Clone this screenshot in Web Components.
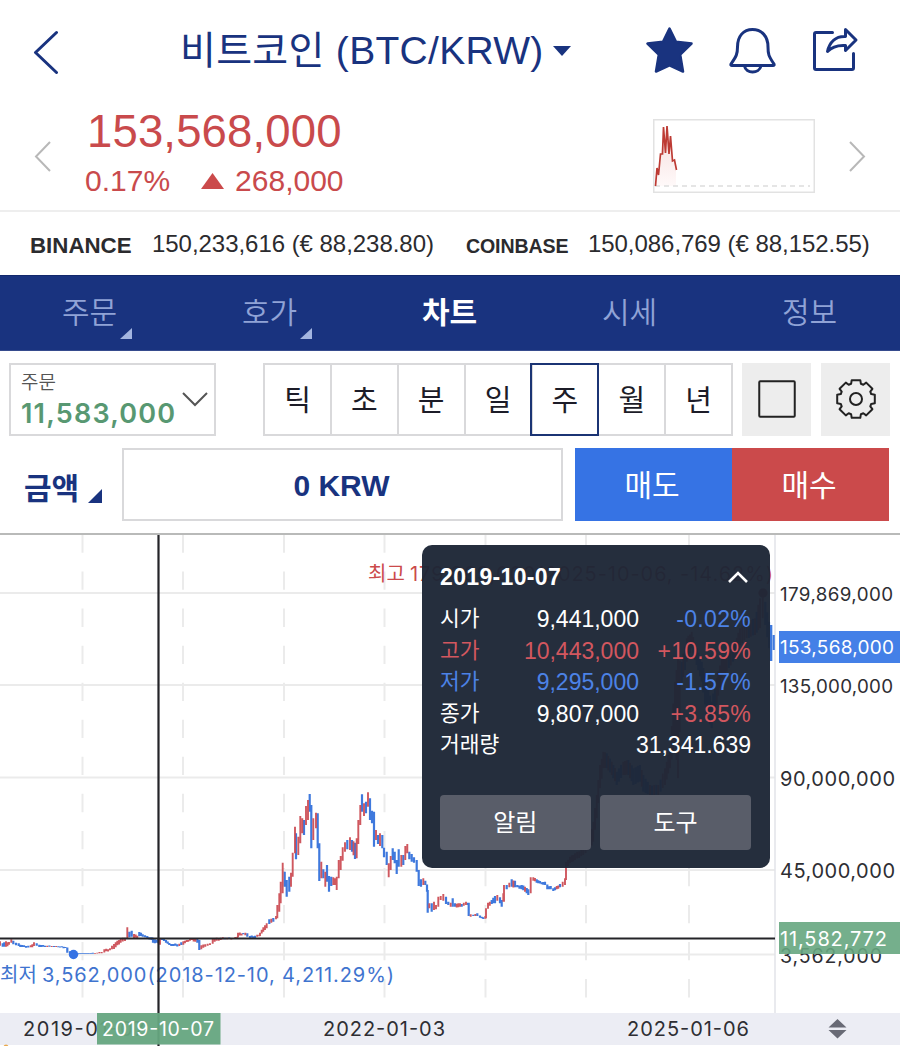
<!DOCTYPE html>
<html lang="ko">
<head>
<meta charset="utf-8">
<title>BTC/KRW</title>
<style>
  body {
    margin: 0;
    width: 900px;
    height: 1046px;
    overflow: hidden;
    background: #fff;
    color: #2b2b2e;
    font-family: "Liberation Sans", "Noto Sans CJK KR", sans-serif;
    --navy: #19337f;
    --red: #cb4a4b;
    --blue: #3673e4;
    --line: #d9d9db;
  }
</style>
</head>
<body>
<coin-app></coin-app>

<script>
"use strict";

////////////////////////////////////////////
// Base class: opens a shadow root and fills it from render()
class BaseElement extends HTMLElement {
  constructor() {
    super();
    this._root = this.attachShadow({ mode: "open" });
  }
  connectedCallback() {
    this._root.innerHTML = `<style>* { box-sizing: border-box; }</style>` + this.render();
  }
}

////////////////////////////////////////////
// Header
class AppHeader extends BaseElement {
  render() {
    return `
      <style>
        :host { display: flex; height: 102px; color: var(--navy); align-items: center; padding-left: 32px; }
        svg { display: block; fill: none; stroke: var(--navy); stroke-linecap: round; stroke-linejoin: round; flex: none; }
        h1 { margin: 0 0 0 120px; width: 365px; font-size: 39px; font-weight: 400; line-height: 60px; letter-spacing: .3px; white-space: nowrap; }
        .caret { margin-left: 7px; fill: var(--navy); stroke: none; }
        .icons { display: flex; margin-left: 74px; gap: 36px; }
      </style>
      <svg width="28" height="46" viewBox="0 0 28 46" stroke-width="3"><path d="M24.500 4.500L3.500 24.500l21 20"/></svg>
      <h1><slot></slot></h1>
      <svg class="caret" width="20" height="12" viewBox="0 0 20 12"><path d="M1 1h18l-9 10z"/></svg>
      <div class="icons">
        <svg width="47" height="48" viewBox="0 0 47 48" stroke-width="2.500" style="fill:var(--navy)"><path d="M23.500 3l6.500 13.300 15.500 1.800-11.300 11 2.800 16.900-13.500-6.200L10 46l2.800-16.900L1.500 18.100 17 16.300z" transform="translate(0 -1.500)"/></svg>
        <svg width="47" height="48" viewBox="0 0 47 48" stroke-width="3"><path d="M8.500 22c0-11 6-17.500 15-17.500S39 11 39 22c0 7 .5 9 6 17q.5 1.600-1 1.600H3q-1.500 0-1-1.600c5.500-8 6.500-10 6.500-17zM15.500 41c1.500 8 14.500 8 16.500 0" transform="translate(0 -2)"/></svg>
        <svg width="48" height="48" viewBox="0 0 48 48" stroke-width="3"><path d="M20.500 5.500H4q-1.500 0-1.500 1.500v34q0 1.500 1.500 1.500h36q1.500 0 1.500-1.500V26.500"/><path d="M15.500 24.500c2-9 8-15.500 18-15V2.500l10.500 10.500-10.500 10.500v-5c-8-.5-13.500 1-18 6z"/></svg>
      </div>`;
  }
}

////////////////////////////////////////////
// Price, change and the small day chart
class QuoteSummary extends BaseElement {
  render() {
    return `
      <style>
        :host { display: flex; align-items: center; height: 110px; border-bottom: 2px solid #eee; color: #c94a4c; padding: 0 34px; }
        svg { display: block; flex: none; }
        .quote { margin-left: 33px; flex: 1; align-self: flex-start; }
        .price { font-size: 45.500px; line-height: 50px; letter-spacing: .15px; margin: 5px 0 0 2px; }
        .change { display: flex; align-items: center; font-size: 30px; line-height: 34px; margin-top: 7px; }
        .change svg { margin: 0 11px 0 31px; }
      </style>
      <svg width="18" height="32" viewBox="0 0 18 32" fill="none" stroke="#b8b8b8" stroke-width="2"><path d="M16 2L2 16.500 16 31"/></svg>
      <div class="quote">
        <div class="price"><slot name="price"></slot></div>
        <div class="change">
          <slot name="rate"></slot>
          <svg width="23" height="16" viewBox="0 0 23 16"><path d="M11.500 0L23 16H0z" fill="#cb4a4b"/></svg>
          <slot name="diff"></slot>
        </div>
      </div>
      <svg width="162" height="74" viewBox="0 0 162 74" style="margin-right:33px">
        <defs><linearGradient id="fade" x2="0" y2="1"><stop stop-color="#eec4c4"/><stop offset="1" stop-color="#fff5f5"/></linearGradient></defs>
        <rect x=".75" y=".75" width="160.500" height="72.500" fill="#fff" stroke="#e2e2e2" stroke-width="1.500"/>
        <path d="M2 67L4 48l2 7 2-20 3-25 2 25 2-28 1.500 28 1.500-18 2 26 2-1 1 10v15z" fill="url(#fade)" opacity=".6"/>
        <path d="M2 67H157" stroke="#ddd" stroke-width="1.500" stroke-dasharray="5 4"/>
        <path d="M2.500 67L4 49l1.500 7L7.500 35h2l1-27 2 26 1.500-27 2 28 1.500-18 2 25 2-1 2 10" fill="none" stroke="#bd3b34" stroke-width="1.700"/>
      </svg>
      <svg width="18" height="32" viewBox="0 0 18 32" fill="none" stroke="#b8b8b8" stroke-width="2"><path d="M2 2l14 14.500L2 31"/></svg>`;
  }
}

class ExchangeQuote extends BaseElement {
  render() {
    return `
      <style>
        :host { display: flex; align-items: baseline; white-space: nowrap; font-size: 24px; letter-spacing: -.04px; }
        b { font-size: 22.300px; margin-right: 19px; width: 103px; letter-spacing: 0; position: relative; top: 1px; }
        :host([compact]) b { font-size: 19.600px; letter-spacing: -.1px; }
      </style>
      <b>${this.getAttribute("name")}</b><slot></slot>`;
  }
}

////////////////////////////////////////////
// Tabs
class TabItem extends BaseElement {
  render() {
    return `
      <style>
        :host { display: flex; align-items: center; justify-content: center; position: relative; flex: 1; color: #90a3d6; font-size: 30px; font-weight: 350; padding-bottom: 6px; padding-right: 1px; }
        :host([active]) { color: #fff; font-weight: 700; }
        .corner { display: none; position: absolute; right: 48px; bottom: 11px; }
        :host([menu]) .corner { display: block; }
      </style>
      <slot></slot>
      <svg class="corner" width="12" height="11" viewBox="0 0 12 11"><path d="M12 0v11H0z" fill="#a3b5e0"/></svg>`;
  }
}

class TabBar extends BaseElement {
  render() {
    return `
      <style>:host { display: flex; height: 76px; background: var(--navy); border-top: 1px solid #12286c; border-bottom: 1px solid #364b8d; }</style>
      <slot></slot>`;
  }
}

////////////////////////////////////////////
// Chart toolbar
class OrderBox extends BaseElement {
  render() {
    return `
      <style>
        :host { display: flex; align-items: center; width: 207px; height: 73px; border: 2px solid var(--line); padding: 0 0 0 10px; }
        .label { font-size: 19px; line-height: 25px; color: #555; font-weight: 350; }
        .value { font: 600 27px/32px Inter, sans-serif; color: #589872; letter-spacing: 1.200px; margin-top: 3px; }
        .text { width: 161px; white-space: nowrap; }
        svg { margin-bottom: 1px; }
      </style>
      <div class="text">
        <div class="label">${this.getAttribute("label")}</div>
        <div class="value"><slot></slot></div>
      </div>
      <svg width="26" height="16" viewBox="0 0 26 16" fill="none" stroke="#555" stroke-width="2"><path d="M1 2l12 12L25 2"/></svg>`;
  }
}

class PeriodItem extends BaseElement {
  render() {
    return `
      <style>
        :host { display: flex; align-items: center; justify-content: center; width: 69px; height: 73px; margin-right: -2.100px; border: 2px solid var(--line); font-size: 29px; color: #1c1c28; padding-bottom: 4px; }
        :host([active]) { border-color: #1b3474; position: relative; }
      </style>
      <slot></slot>`;
  }
}

class ToolButton extends BaseElement {
  render() {
    return `
      <style>:host { display: flex; align-items: center; justify-content: center; width: 69px; height: 73px; background: #ededed; padding-bottom: 1px; }</style>
      <slot></slot>`;
  }
}

class ChartToolbar extends BaseElement {
  render() {
    return `
      <style>
        :host { display: flex; height: 73px; padding: 0 10px 0 9px; margin-top: 12px; }
        .periods { display: flex; margin: 0 11px 0 47px; width: 468px; flex: none; }
        tool-button + tool-button { margin-left: 10px; }
        svg { display: block; }
      </style>
      <order-box label="주문">11,583,000</order-box>
      <div class="periods">
        ${["틱", "초", "분", "일", "주", "월", "년"].map((p) => `<period-item${p === "주" ? " active" : ""}>${p}</period-item>`).join("")}
      </div>
      <tool-button><svg width="38" height="38" viewBox="0 0 38 38"><rect x="1.250" y="1.250" width="35.500" height="35.500" rx="1" fill="none" stroke="#222" stroke-width="2"/></svg></tool-button>
      <tool-button>
        <svg width="42" height="42" viewBox="-21 -21 42 42" fill="none" stroke="#222" stroke-width="2" stroke-linejoin="round">
          <path d="${gearPath()}"/><circle r="6"/>
        </svg>
      </tool-button>`;
  }
}

class AmountRow extends BaseElement {
  render() {
    return `
      <style>
        :host { display: flex; height: 73px; margin-top: 12px; padding: 0 11px 0 24px; color: var(--navy); font-weight: 700; }
        .label { display: flex; width: 97.500px; font-size: 30px; align-items: center; padding-top: 3px; }
        .label svg { margin: 19px 0 0 9px; }
        .amount { display: flex; align-items: center; justify-content: center; width: 441px; border: 2px solid var(--line); font-size: 30px; padding: 3px 1px 0 0; margin-right: 12px; }
        .side { display: flex; align-items: center; justify-content: center; width: 157px; color: #fff; font-weight: 400; font-size: 30px; padding: 0 2px 4px 0; }
        .sell { background: var(--blue); }
        .buy { background: var(--red); }
      </style>
      <div class="label">금액<svg width="14" height="14" viewBox="0 0 14 14"><path d="M14 0v14H0z" fill="#19337f"/></svg></div>
      <div class="amount"><slot></slot></div>
      <div class="side sell">매도</div>
      <div class="side buy">매수</div>`;
  }
}

// Gear outline with eight teeth
function gearPath() {
  const points = [];
  for (let i = 0; i < 8; i++) {
    [[-18, 16], [-13, 19.300], [13, 19.300], [18, 16]].forEach(([deg, r]) => {
      const a = ((i * 45 + deg - 90) * Math.PI) / 180;
      points.push(`${(Math.cos(a) * r).toFixed(1)} ${(Math.sin(a) * r).toFixed(1)}`);
    });
  }
  return `M${points.join("L")}z`;
}

////////////////////////////////////////////
// Candle data. Each chunk has its own origin and is stored at 3x.
// Points: x, high, low, colour (r = up, b = down, m = alternating)
const CHUNKS = [
  { x: 0, y: 780, points: `0 484 497r 8 490 500b 18 484 500r 27 486 494r 34 478 488r 40 482 493b 48 488 496b 56 490 498b 66 495 501b 78 498 503b 92 496 502r 102 487 498r 110 490 497b 118 494 501b 135 497 501m 155 498 501m 175 499 502b 196 501 504b 202 506 518b 210 514 523b 220 520 524b 245 520 522b 265 520 522b 285 519 521r 305 516 520r 313 508 517r 330 505 511r 342 492 507r 352 482 496r 362 475 488r 375 473 483r 382 442 475r 388 455 472b 395 452 470b 402 462 474r 412 467 475m 418 456 468b 428 463 470b 442 468 474b 455 472 480b 459 473 488b 470 480 488b 480 474 494r 486 476 480b 498 480 488b 508 489 495b 520 492 498b 538 491 498m 550 484 494r 560 480 486r 575 475 480r 592 474 488b 598 480 510b 604 496 508r 616 493 500r 630 490 495r 638 476 488r 650 473 482r 675 473 478m 700 474 477m 712 470 476r 714 458 470r 730 459 463m 742 460 470b 750 468 474b 765 467 474m 778 464 469r` },
  { x: 240, y: 770, points: `60 488 498r 70 472 485r 80 460 475r 88 448 462m 100 444 455m 108 438 448r 112 405 445r 118 370 425r 122 335 400r 128 278 370r 134 305 350b 140 330 380b 148 320 365m 153 308 350r 158 248 320r 165 170 250r 168 190 268m 175 200 255r 181 138 220r 187 145 190m 192 150 195m 198 108 165r 204 90 150r 209 72 125b 214 105 235b 220 145 210r 228 128 175r 233 130 235b 238 220 333b 244 275 325m 250 298 325m 256 305 350r 261 285 335b 267 318 365b 274 320 348m 280 322 345m 285 325 345r 290 320 360r 296 270 325r 302 258 300r 308 232 272r 315 217 245r 322 210 238m 330 202 240m 336 210 245m 345 218 267m 350 205 265r 355 150 222r 361 105 165r 366 73 125b 372 100 138m 378 95 130m 384 67 110r 390 85 150b 396 122 160b 402 125 230b 408 180 210m 414 195 222m 420 190 228m 427 195 235b 432 235 262b 440 245 285b 446 280 322r 452 258 300r 458 235 270b 464 245 280b 470 270 312b 476 238 290m 484 255 290r 490 255 285m 496 228 270r 502 222 250r 508 245 268b 515 252 275b 522 262 278b 530 270 305b 536 300 348b 543 328 350m 550 325 345m 556 332 345b 561 360 365b 563 360 428b 568 400 415m 575 400 425b 582 395 420r 588 405 418r 595 380 410r 602 378 390r 610 372 392m 618 380 402b 625 395 405b 632 398 410r 638 385 410b 645 400 410m 655 400 412r 665 402 410m 678 395 405r 684 398 405b 686 398 438b 692 433 440r 700 434 438m 712 430 438m 720 438 443b 730 442 447b 736 438 446r 738 415 445r 744 398 410r 755 390 402b 765 378 400m 772 375 392r 780 382 400b 785 390 410b 790 370 395r 792 345 395r 800 345 358b 808 338 352r 815 328 350m 825 332 352m 832 345 352b 845 345 358b 855 350 365m 865 358 375b 872 322 370r 880 322 332r 890 328 338b 905 337 343b 915 335 345b 922 350 358b 932 348 358b 940 355 363b 950 348 358r 960 342 352b 968 335 350r 975 325 345r 978 290 330r` },
  { x: 410, y: 535, points: `468 980 1000r 480 965 985r 495 955 975r 520 940 960r 540 900 940r 550 860 920r 560 780 850r 570 690 760r 580 650 700r 590 655 700m 605 680 720m 620 710 750b 640 680 720r 655 675 720m 670 700 750b 690 690 740m 700 720 770b 720 750 780m 745 750 780m 765 700 750r 780 640 700r 795 440 620r 804 370 730r 815 380 450m 830 310 380r 845 290 340r 860 340 390b 875 380 440b 890 440 540b 905 500 580b 920 430 510r 935 370 430r 950 360 410m 975 320 370r 990 280 330r 1010 260 310m 1035 250 300m 1050 190 280r 1058 175 250r 1066 200 270b 1077 260 340b 1083 270 378b 1091 300 345b` },
];
const CANDLE_STEP = 6;

// Spreads bars every 2px between the stored points, each one touching the bar before it
function buildCandles() {
  const paths = { r: "", b: "" };
  let flip = 0;
  CHUNKS.forEach((chunk) => {
    const pts = chunk.points.match(/\d+ \d+ \d+[rbm]/g).map((s) => {
      const [x, top, bottom] = s.split(" ").map((n) => parseInt(n, 10));
      return { x, top, bottom, c: s.slice(-1) };
    });
    let last = null;
    pts.forEach((p, i) => {
      const next = pts[i + 1] ?? p;
      const count = Math.max(1, Math.round((next.x - p.x) / CANDLE_STEP));
      for (let k = 0; k < count; k++) {
        const t = k / count;
        const wob = k ? [-1, 1.500, 0][flip % 3] : 0;
        const x = chunk.x + (p.x + (next.x - p.x) * t) / 3;
        let top = chunk.y + (p.top + (next.top - p.top) * t + wob) / 3;
        let bottom = chunk.y + (p.bottom + (next.bottom - p.bottom) * t + wob) / 3;
        if (last) {
          top = Math.min(top, last.bottom - 0.500);
          bottom = Math.max(bottom, last.top + 0.500);
        }
        const c = p.c === "m" ? (flip % 2 ? "r" : "b") : p.c;
        paths[c] += `M${x.toFixed(1)} ${top.toFixed(1)}V${bottom.toFixed(1)}`;
        last = { top, bottom };
        flip++;
      }
    });
  });
  return paths;
}

////////////////////////////////////////////
// Chart
class PriceChart extends BaseElement {
  render() {
    const candles = buildCandles();
    const prices = [
      ["179,869,000", 593.500, 113, 18.800],
      ["135,000,000", 686, 113, 18.800],
      ["90,000,000", 778.500, 115, 20],
      ["45,000,000", 871, 115, 20],
      ["3,562,000", 955.500, 102, 19.500],
    ];
    const price = ([text, y, width, size]) => `<text x="780" y="${y + 7}" textLength="${width}" style="font-size:${size}px">${text}</text>`;
    return `
      <style>
        :host { display: block; position: relative; height: 511px; margin-top: 12px; border-top: 2px solid #b9bab9; }
        svg { display: block; }
        text { font-family: Inter, "Noto Sans CJK KR", sans-serif; font-size: 20px; fill: #2e2e33; }
        .low { fill: #3f74cf; }
        .high { fill: #cb4a4b; }
        ::slotted(*) { position: absolute; left: 422px; top: 10px; }
      </style>
      <svg width="900" height="511" viewBox="0 535 900 511">
        <g stroke="#ebebeb" stroke-width="2" fill="none">
          ${[593, 685, 777.500, 870, 954.500].map((y) => `<path d="M0 ${y}H775"/>`).join("")}
          ${[82.500, 183, 284, 384.500, 485.500, 586, 689].map((x) => `<path d="M${x} 534.500V998" stroke-dasharray="18.300 18.750"/>`).join("")}
          <path d="M775 535V1013" stroke="#e2e3e8" stroke-width="1.500"/>
        </g>
        <rect y="1013" width="900" height="32" fill="#ecedf4"/>
        <path d="${candles.b}" stroke="#3f79dd" stroke-width="2.200"/>
        <path d="${candles.r}" stroke="#cc4a52" stroke-width="1.900" opacity=".92"/>
        <path d="M771 625V661" stroke="#3f79dd" stroke-width="2.500"/>
        <circle cx="73.500" cy="954.500" r="4.700" fill="#3673e4"/>
        <circle cx="763" cy="593" r="4.700" fill="#cb4a4b"/>
        <text class="low" x="0" y="982">최저 <tspan x="42" textLength="352">3,562,000(2018-12-10, 4,211.29%)</tspan></text>
        <text class="high" x="368" y="581">최고 <tspan x="410" textLength="363">179,869,000(2025-10-06, -14.62%)</tspan></text>
        <text x="23" y="1036" textLength="122">2019-01-07</text>
        <text x="323" y="1036" textLength="122">2022-01-03</text>
        <text x="627" y="1036" textLength="122">2025-01-06</text>
        <path d="M158.500 535V1046M0 938.500H775" stroke="#242428" stroke-width="2.200"/>
        <rect x="97" y="1013" width="123.500" height="31.500" fill="#66a67f" opacity=".95"/>
        <text x="102" y="1036" textLength="112" style="fill:#fff;font-size:19.500px">2019-10-07</text>
        ${prices.map(price).join("")}
        <rect x="779" y="631" width="121" height="32" fill="#4480e7"/>
        <text x="780" y="654" textLength="114" style="fill:#fff;font-size:19px">153,568,000</text>
        <rect x="779" y="922" width="121" height="32" fill="#66a67f" opacity=".9"/>
        <text x="780" y="946" textLength="107" style="fill:#fff">11,582,772</text>
        <path d="M828.500 1027.500h18l-9-8.500zM828.500 1030h18l-9 8.500z" fill="#686a75"/>
        <circle cx="6" cy="1047" r="2.500" fill="#eaa94e"/>
      </svg>
      <slot></slot>`;
  }
}

// Values of the candle under the crosshair
class CandleInfo extends BaseElement {
  render() {
    const rows = [
      ["시가", "9,441,000", "-0.02%", "", "down"],
      ["고가", "10,443,000", "+10.59%", "up", "up"],
      ["저가", "9,295,000", "-1.57%", "down", "down"],
      ["종가", "9,807,000", "+3.85%", "", "up"],
    ];
    return `
      <style>
        :host { display: block; width: 348px; height: 322.500px; border-radius: 10px; background: rgba(29, 38, 54, .965); color: #fff; padding: 15px 19px 0 18px; font-size: 23px; }
        header { display: flex; justify-content: space-between; align-items: center; height: 34px; font-weight: 700; letter-spacing: .35px; padding-right: 3px; margin-bottom: 10px; }
        .row { display: grid; grid-template-columns: 66px 133px 1fr; height: 31.600px; line-height: 31.600px; text-align: right; }
        .row span:first-child { text-align: left; font-size: 21.500px; white-space: nowrap; }
        .rate { letter-spacing: .3px; }
        .wide { grid-column: 2 / 4; }
        .up { color: #d2575f; }
        .down { color: #4c82e6; }
        footer { display: flex; gap: 9.500px; margin-top: 33px; }
        button { flex: 1; height: 55.500px; border: 0; border-radius: 4px; background: #595d69; color: #fff; font: inherit; font-size: 24px; padding: 0 0 4px; }
      </style>
      <header><slot></slot><svg width="20" height="12" viewBox="0 0 20 12" fill="none" stroke="#fff" stroke-width="2.600"><path d="M1 11l9-9 9 9"/></svg></header>
      ${rows.map(([label, value, rate, tone, rateTone]) => `<div class="row"><span class="${tone}">${label}</span><span class="${tone}">${value}</span><span class="rate ${rateTone}">${rate}</span></div>`).join("")}
      <div class="row"><span>거래량</span><span class="wide">31,341.639</span></div>
      <footer><button>알림</button><button>도구</button></footer>`;
  }
}

////////////////////////////////////////////
// Page
class CoinApp extends BaseElement {
  render() {
    return `
      <style>
        :host { display: block; width: 900px; }
        .exchanges { display: flex; height: 63px; align-items: center; padding: 0 0 0 30px; gap: 32px; }
      </style>
      <app-header>비트코인 (BTC/KRW)</app-header>
      <quote-summary><span slot="price">153,568,000</span><span slot="rate">0.17%</span><span slot="diff">268,000</span></quote-summary>
      <div class="exchanges">
        <exchange-quote name="BINANCE">150,233,616 (€ 88,238.80)</exchange-quote>
        <exchange-quote name="COINBASE" compact>150,086,769 (€ 88,152.55)</exchange-quote>
      </div>
      <tab-bar>
        <tab-item menu>주문</tab-item>
        <tab-item menu>호가</tab-item>
        <tab-item active>차트</tab-item>
        <tab-item>시세</tab-item>
        <tab-item>정보</tab-item>
      </tab-bar>
      <chart-toolbar></chart-toolbar>
      <amount-row>0 KRW</amount-row>
      <price-chart><candle-info>2019-10-07</candle-info></price-chart>`;
  }
}

////////////////////////////////////////////
// Registration
customElements.define("app-header", AppHeader);
customElements.define("quote-summary", QuoteSummary);
customElements.define("exchange-quote", ExchangeQuote);
customElements.define("tab-item", TabItem);
customElements.define("tab-bar", TabBar);
customElements.define("order-box", OrderBox);
customElements.define("period-item", PeriodItem);
customElements.define("tool-button", ToolButton);
customElements.define("chart-toolbar", ChartToolbar);
customElements.define("amount-row", AmountRow);
customElements.define("candle-info", CandleInfo);
customElements.define("price-chart", PriceChart);
customElements.define("coin-app", CoinApp);
</script>
</body>
</html>
